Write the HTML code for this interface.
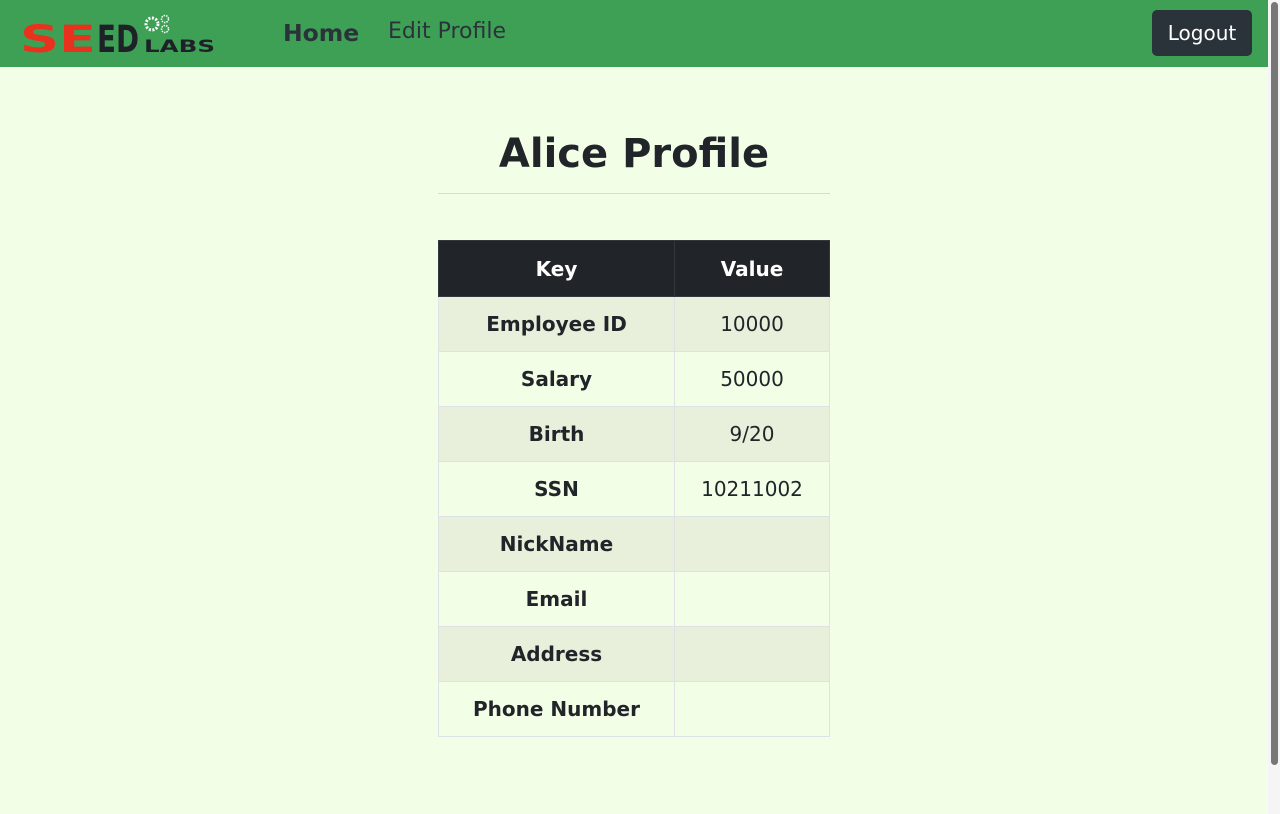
<!DOCTYPE html>
<html><head><meta charset="utf-8">
<style>
*{box-sizing:border-box;margin:0;padding:0}
html,body{width:1280px;height:814px;overflow:hidden}
body{background:#f3fee6;font-family:"DejaVu Sans","Liberation Sans",sans-serif;color:#212529;position:relative}
.nav{position:absolute;left:0;top:0;width:1268px;height:67px;background:#3ea055}
.home{position:absolute;left:283px;top:19px;font-size:23.5px;font-weight:bold;color:#2b333a}
.edit{position:absolute;left:388px;top:19px;font-size:22px;color:#2b333a}
.btn{position:absolute;left:1152px;top:10px;width:100px;height:46px;background:#2a323a;border-radius:5px;color:#fff;font-size:20px;text-align:center;line-height:46px}
h1{position:absolute;left:438px;width:392px;top:131px;text-align:center;font-size:40px;font-weight:bold}
.hr{position:absolute;left:438px;top:193px;width:392px;height:1px;background:#d9dcd6}
table{position:absolute;left:438px;top:240px;width:392px;border-collapse:collapse;font-size:20px}
td,th{height:55px;text-align:center;border:1px solid #dee2e6}
th{background:#212529;color:#fff;border-color:#32383e;height:56px}
td:first-child{font-weight:bold;width:236px}
tr:nth-child(even) td{background:#e8f0db}
.sb{position:absolute;left:1268px;top:0;width:12px;height:814px;background:#f5f5f5}
.thumb{position:absolute;left:1271px;top:2px;width:7px;height:763px;background:#777;border-radius:4px}
</style></head><body>
<div class="nav">
<svg style="position:absolute;left:0;top:0" width="230" height="67" viewBox="0 0 230 67">
<text x="20" y="52" font-family="DejaVu Sans" font-weight="bold" font-size="37" fill="#e8321e" textLength="76" lengthAdjust="spacingAndGlyphs">SE</text>
<text x="97" y="52" font-family="DejaVu Sans" font-weight="bold" font-size="37" fill="#1e2228" textLength="42" lengthAdjust="spacingAndGlyphs">ED</text>
<text x="144" y="52" font-family="DejaVu Sans" font-weight="bold" font-size="17" fill="#1e2228" textLength="71" lengthAdjust="spacingAndGlyphs">LABS</text>
<circle cx="152" cy="24" r="6" fill="none" stroke="#fff" stroke-width="3" stroke-dasharray="2 1.5"/>
<circle cx="165" cy="19" r="3.5" fill="none" stroke="#fff" stroke-width="1.5" stroke-dasharray="1.5 1"/>
<circle cx="165" cy="29" r="3.5" fill="none" stroke="#fff" stroke-width="1.5" stroke-dasharray="1.5 1"/>
</svg>
<div class="home">Home</div>
<div class="edit">Edit Profile</div>
<div class="btn">Logout</div>
</div>
<h1>Alice Profile</h1>
<div class="hr"></div>
<table>
<tr><th>Key</th><th>Value</th></tr>
<tr><td>Employee ID</td><td>10000</td></tr>
<tr><td>Salary</td><td>50000</td></tr>
<tr><td>Birth</td><td>9/20</td></tr>
<tr><td>SSN</td><td>10211002</td></tr>
<tr><td>NickName</td><td></td></tr>
<tr><td>Email</td><td></td></tr>
<tr><td>Address</td><td></td></tr>
<tr><td>Phone Number</td><td></td></tr>
</table>
<div class="sb"></div>
<div class="thumb"></div>
</body></html>
